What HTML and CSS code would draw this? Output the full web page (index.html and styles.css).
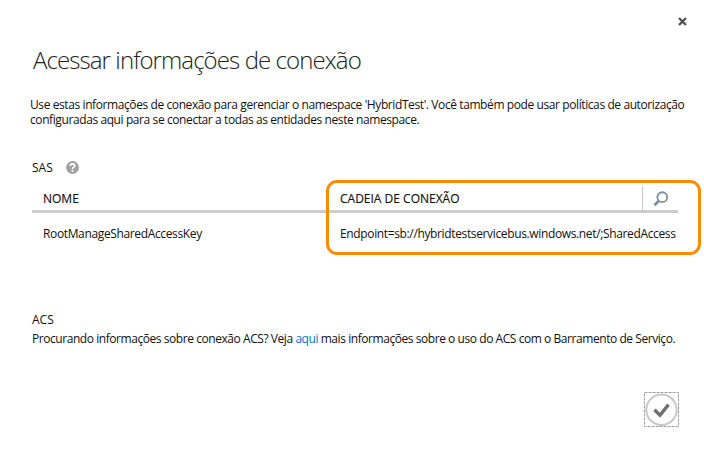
FILE: index.html
```html
<!DOCTYPE html>
<html lang="pt-BR">
<head>
<meta charset="utf-8">
<title>Acessar informações de conexão</title>
<link rel="stylesheet" href="styles.css">
</head>
<body>
<main class="dialog">
  <button class="close" aria-label="Fechar"><svg width="9" height="9" viewBox="0 0 9 9"><path d="M1 1 8 8M8 1 1 8"/></svg></button>
  <h1 class="title">Acessar informações de conexão</h1>
  <p class="intro">Use estas informações de conexão para gerenciar o namespace 'HybridTest'. Você também pode usar políticas de autorização<br>configuradas aqui para se conectar a todas as entidades neste namespace.</p>
  <section class="sas">
    <div class="label"><span>SAS</span>
      <svg class="help" width="13" height="13" viewBox="0 0 13 13"><circle cx="6.5" cy="6.5" r="6.4"/><path d="M4.3 5C4.3 2.2 8.7 2.3 8.7 4.7 8.7 6.2 6.5 6.1 6.5 7.9M6.5 8.9v1.8"/></svg>
    </div>
    <div class="table">
      <div class="row head">
        <div class="name">NOME</div>
        <div class="conn">CADEIA DE CONEXÃO</div>
        <div class="search"><svg width="16" height="16" viewBox="0 0 16 16"><circle cx="9.3" cy="6.2" r="4.9"/><path class="handle" d="M5.8 9.8 1.5 14.2"/></svg></div>
      </div>
      <div class="row body">
        <div class="name">RootManageSharedAccessKey</div>
        <div class="conn">Endpoint=sb://hybridtestservicebus.windows.net/;SharedAccess</div>
      </div>
      <div class="highlight"></div>
    </div>
  </section>
  <section class="acs">
    <div>ACS</div>
    <p>Procurando informações sobre conexão ACS? Veja <a href="#">aqui</a> mais informações sobre o uso do ACS com o Barramento de Serviço.</p>
  </section>
  <button class="confirm" aria-label="OK"><svg width="35" height="36" viewBox="0 0 35 36"><rect x=".5" y=".5" width="34" height="34"/><circle cx="17.5" cy="17.7" r="15.2"/><path d="M10.5 17.8 16 23.2 24.5 12.6"/></svg></button>
</main>
</body>
</html>
```
FILE: styles.css
```css
* { box-sizing: border-box; }
body { margin: 0; background: #fff; color: #111; font: 12px/15px "Open Sans", "Noto Sans", sans-serif; white-space: nowrap; }
h1, p { margin: 0; }
button { border: 0; padding: 0; background: none; display: block; }
svg { display: block; }
.dialog { width: 704px; height: 453px; padding: 17px 0 0; display: flex; flex-direction: column; align-items: flex-start; overflow: hidden; }
.close { height: 9px; margin-left: 678px; }
.close path { stroke: #505050; stroke-width: 2.3; }
.title { margin: 18px 0 0 33px; font-size: 24px; line-height: 32px; font-weight: 300; color: #222; letter-spacing: -.91px; }
.intro { margin: 21px 0 0 30px; letter-spacing: -.405px; }
.sas { margin: 33px 0 0 32px; }
.label { display: flex; gap: 13px; height: 15px; align-items: center; }
.help circle { fill: #a0a0a0; }
.help path { fill: none; stroke: #fff; stroke-width: 1.8; }
.table { position: relative; width: 646px; margin-top: 10px; }
.row { display: flex; }
.head { height: 28px; border-bottom: 3px solid #ccc; align-items: flex-end; }
.head .name, .head .conn { padding-bottom: 4px; -webkit-text-stroke: .15px #111; }
.name { width: 297px; padding-left: 11px; }
.conn { width: 313px; padding-left: 11px; }
.search { width: 36px; height: 24px; border-left: 1px solid #ccc; padding: 5px 0 0 10px; }
.search circle { fill: none; stroke: #8090a0; stroke-width: 1.9; }
.search .handle { stroke: #8090a0; stroke-width: 2.8; }
.body { padding-top: 13px; letter-spacing: -.36px; }
.highlight { position: absolute; left: 294px; top: -5px; width: 375px; height: 75px; border: 3px solid #ff8c00; border-radius: 11px; }
.acs { margin: 71px 0 0 32px; }
.acs p { margin-top: 4px; letter-spacing: -.44px; }
.acs a { color: #0078d0; text-decoration: none; }
.confirm { margin: 46px 0 0 644px; }
.confirm rect { fill: none; stroke: #a0a0a0; stroke-dasharray: 3 1; }
.confirm circle { fill: none; stroke: #c8c8c8; stroke-width: 2; }
.confirm path { fill: none; stroke: #707070; stroke-width: 3.4; }
```
